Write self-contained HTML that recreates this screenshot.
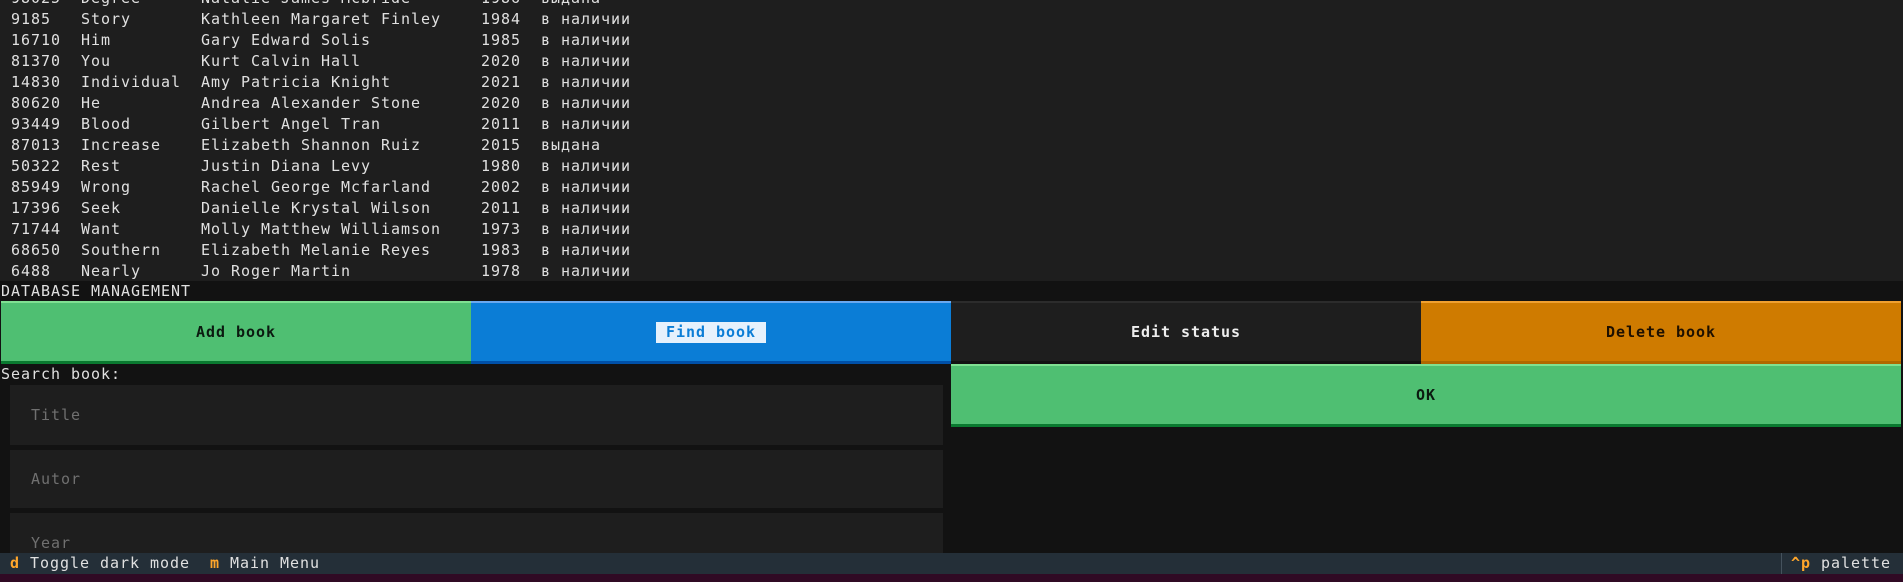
<!DOCTYPE html>
<html><head><meta charset="utf-8"><style>
*{margin:0;padding:0;box-sizing:border-box}
body{width:1903px;height:582px;background:#121212;position:relative;overflow:hidden;font-family:"DejaVu Sans Mono","Liberation Mono",monospace;font-size:15px;letter-spacing:0.97px;color:#e0e0e0}
.top{position:absolute;left:0;top:0;width:1903px;height:281px;background:#1e1e1e;overflow:hidden}
pre{position:absolute;left:1px;top:-12px;font:inherit;line-height:21px;white-space:pre}
.abs{position:absolute}
.lbl{position:absolute;left:1px;line-height:21px;height:21px}
.btn{position:absolute;top:301px;height:63px;display:flex;align-items:center;justify-content:center;font-weight:bold}
.inp{position:absolute;left:10px;width:933px;background:#1e1e1e;color:#707070;padding-left:21px;display:flex;align-items:center}
</style></head><body>
<div class="top"><pre> 98025  Degree      Natalie James Mcbride       1986  выдана
 9185   Story       Kathleen Margaret Finley    1984  в наличии
 16710  Him         Gary Edward Solis           1985  в наличии
 81370  You         Kurt Calvin Hall            2020  в наличии
 14830  Individual  Amy Patricia Knight         2021  в наличии
 80620  He          Andrea Alexander Stone      2020  в наличии
 93449  Blood       Gilbert Angel Tran          2011  в наличии
 87013  Increase    Elizabeth Shannon Ruiz      2015  выдана
 50322  Rest        Justin Diana Levy           1980  в наличии
 85949  Wrong       Rachel George Mcfarland     2002  в наличии
 17396  Seek        Danielle Krystal Wilson     2011  в наличии
 71744  Want        Molly Matthew Williamson    1973  в наличии
 68650  Southern    Elizabeth Melanie Reyes     1983  в наличии
 6488   Nearly      Jo Roger Martin             1978  в наличии</pre></div>
<div class="lbl" style="top:281px">DATABASE MANAGEMENT</div>
<div class="btn" style="left:1px;width:470px;background:#4fbf72;border-top:2px solid #7fe092;border-bottom:3px solid #0a7a30;color:#0b1a10">Add book</div>
<div class="btn" style="left:471px;width:480px;background:#0b7dd6;border-top:2px solid #6aa8ef;border-bottom:3px solid #0050a8"><span style="background:#e6f1fc;color:#0b7dd6;padding:0 10px;line-height:21px">Find book</span></div>
<div class="btn" style="left:951px;width:470px;background:#1e1e1e;border-top:2px solid #2c2c2c;border-bottom:3px solid #121212;color:#eeeeee">Edit status</div>
<div class="btn" style="left:1421px;width:480px;background:#cf7b00;border-top:2px solid #f0a030;border-bottom:3px solid #b06800;color:#1e1000">Delete book</div>
<div class="lbl" style="top:364px">Search book:</div>
<div class="inp" style="top:385px;height:60px">Title</div>
<div class="inp" style="top:450px;height:58px">Autor</div>
<div class="inp" style="top:513px;height:40px;align-items:flex-start;padding-top:20px;line-height:21px">Year</div>
<div class="btn" style="left:951px;width:950px;top:364px;height:63px;background:#4fbf72;border-top:2px solid #7fe092;border-bottom:3px solid #0a7a30;color:#0b1a10">OK</div>
<div class="abs" style="left:0;top:553px;width:1903px;height:21px;background:#242f38;line-height:21px;color:#e0e0e0"><span class="abs" style="left:10px;top:0;white-space:pre"><b style="color:#ffa62b">d</b> Toggle dark mode  <b style="color:#ffa62b">m</b> Main Menu</span><span class="abs" style="left:1781px;top:0;width:1px;height:21px;background:#45525d"></span><span class="abs" style="left:1791px;top:0;white-space:pre"><b style="color:#ffa62b">^p</b> palette</span></div>
<div class="abs" style="left:0;top:574px;width:1903px;height:8px;background:#300a24"></div>
</body></html>
